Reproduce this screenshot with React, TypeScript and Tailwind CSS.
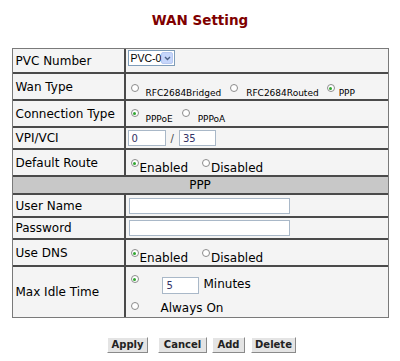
import React from "react";

function Radio({ checked }: { checked?: boolean }) {
  return (
    <span className="flex h-[8px] w-[8px] shrink-0 items-center justify-center rounded-full border border-[#8c8c8c] bg-white">
      {checked && <span className="h-[3px] w-[3px] rounded-full bg-[#2fa62f]" />}
    </span>
  );
}

function Row({ label, h, children, last }: { label: string; h: string; children: React.ReactNode; last?: boolean }) {
  return (
    <div className={`flex ${h} ${last ? "" : "border-b-2 border-[#4a4a4a]"}`}>
      <div className="flex w-[113px] shrink-0 items-center border-r-2 border-[#4a4a4a] pl-[3px]">{label}</div>
      <div className="flex-1">{children}</div>
    </div>
  );
}

function EnableDisable() {
  return (
    <div className="flex items-start pt-[9px] pl-[5px]">
      <Radio checked />
      <span className="mt-[2px] ml-[1px] leading-[14px]">Enabled</span>
      <span className="ml-[14px]">
        <Radio />
      </span>
      <span className="mt-[2px] ml-[1px] leading-[14px]">Disabled</span>
    </div>
  );
}

export default function App() {
  return (
    <div className="h-[361px] w-[400px] bg-white text-[12px] text-black" style={{ fontFamily: '"DejaVu Sans", Verdana, sans-serif' }}>
      <div className="pt-[12px] text-center text-[13.5px] font-bold leading-[16px] text-[#800000]">WAN Setting</div>

      <div className="mx-auto mt-[20px] w-[377px] border border-[#7a7a7a] bg-[#f4f4f4]">
        <Row label="PVC Number" h="h-[25px]">
          <div className="flex pl-[2px] pt-[1px]">
            <div className="flex h-[16px] w-[47px] items-center border border-[#7f9db9] bg-white pl-[2px]" style={{ fontFamily: '"Liberation Sans", Arial, sans-serif' }}>
              <span className="flex-1 whitespace-nowrap text-[10.5px] leading-[14px]">PVC-0</span>
              <span className="mr-[1px] flex h-[12px] w-[12px] shrink-0 items-center justify-center rounded-[2px] border border-[#b7c8f0] bg-[#c6d6fb]">
                <svg width="7" height="5" viewBox="0 0 7 5">
                  <path d="M1 1 L3.5 3.5 L6 1" fill="none" stroke="#4d6185" strokeWidth="1.4" />
                </svg>
              </span>
            </div>
          </div>
        </Row>

        <Row label="Wan Type" h="h-[27px]">
          <div className="flex items-start pt-[10px] pl-[5px] text-[9px] leading-[11px]">
            <Radio />
            <span className="ml-[7px] mt-[4px]">RFC2684Bridged</span>
            <span className="ml-[9px]">
              <Radio />
            </span>
            <span className="ml-[8px] mt-[4px]">RFC2684Routed</span>
            <span className="ml-[8px]">
              <Radio checked />
            </span>
            <span className="ml-[4px] mt-[4px]">PPP</span>
          </div>
        </Row>

        <Row label="Connection Type" h="h-[27px]">
          <div className="flex items-start pt-[8px] pl-[5px] text-[9px] leading-[11px]">
            <Radio checked />
            <span className="ml-[7px] mt-[5px]">PPPoE</span>
            <span className="ml-[9px]">
              <Radio />
            </span>
            <span className="ml-[8px] mt-[5px]">PPPoA</span>
          </div>
        </Row>

        <Row label="VPI/VCI" h="h-[22px]">
          <div className="flex h-full items-center pl-[2px] text-[10px]">
            <div className="flex h-[16px] w-[38px] items-center border border-[#a9b8c8] bg-white pl-[3px] text-[#333366]">0</div>
            <span className="mx-[5px] text-[#444]">/</span>
            <div className="flex h-[16px] w-[37px] items-center border border-[#a9b8c8] bg-white pl-[3px] text-[#333366]">35</div>
          </div>
        </Row>

        <Row label="Default Route" h="h-[27px]">
          <EnableDisable />
        </Row>

        <div className="flex h-[18px] items-center justify-center border-b-2 border-[#4a4a4a] bg-[#c8c8c8] leading-[14px]">PPP</div>

        <Row label="User Name" h="h-[23px]">
          <div className="flex h-full items-center pl-[3px]">
            <div className="h-[16px] w-[161px] border border-[#a9b8c8] bg-white" />
          </div>
        </Row>

        <Row label="Password" h="h-[22px]">
          <div className="flex h-full items-center pl-[3px]">
            <div className="h-[16px] w-[161px] border border-[#a9b8c8] bg-white" />
          </div>
        </Row>

        <Row label="Use DNS" h="h-[27px]">
          <EnableDisable />
        </Row>

        <Row label="Max Idle Time" h="h-[50px]" last>
          <div className="flex flex-col pl-[5px] pt-[6px]">
            <div className="flex h-[26px] items-start">
              <span className="mt-[2px]">
                <Radio checked />
              </span>
              <div className="ml-[23px] mt-[4px] flex h-[17px] w-[37px] items-center border border-[#a9b8c8] bg-white pl-[4px] text-[10px] text-[#333366]">5</div>
              <span className="ml-[5px] mt-[4px] leading-[14px]">Minutes</span>
            </div>
            <div className="flex items-start">
              <span className="mt-[3px]">
                <Radio />
              </span>
              <span className="ml-[22px] mt-[2px] leading-[14px]">Always On</span>
            </div>
          </div>
        </Row>
      </div>

      <div className="mt-[19px] flex justify-center pl-[3px] text-[10px] font-bold leading-[12px] text-[#222]">
        <button className="h-[16px] w-[41px] border border-t-white border-l-white border-r-[#8a8a8a] border-b-[#8a8a8a] bg-[#e4e4e4]">Apply</button>
        <button className="ml-[10px] h-[16px] w-[49px] border border-t-white border-l-white border-r-[#8a8a8a] border-b-[#8a8a8a] bg-[#e4e4e4]">Cancel</button>
        <button className="ml-[5px] h-[16px] w-[33px] border border-t-white border-l-white border-r-[#8a8a8a] border-b-[#8a8a8a] bg-[#e4e4e4]">Add</button>
        <button className="ml-[6px] h-[16px] w-[45px] border border-t-white border-l-white border-r-[#8a8a8a] border-b-[#8a8a8a] bg-[#e4e4e4]">Delete</button>
      </div>
    </div>
  );
}
